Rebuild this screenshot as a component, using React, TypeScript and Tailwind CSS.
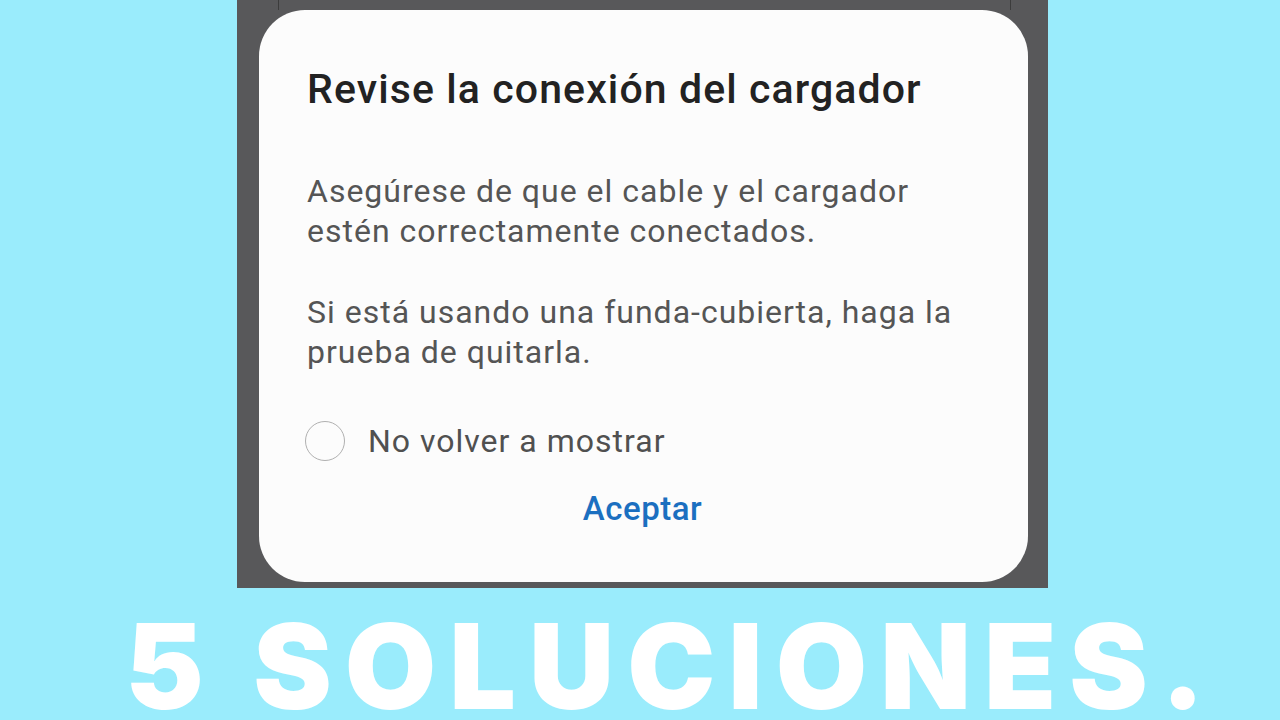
export default function App() {
  return (
    <div className="flex h-[720px] w-[1280px] flex-col overflow-hidden bg-[#9aecfc] font-['Roboto',sans-serif]">
      <div className="relative ml-[237px] flex h-[588px] w-[811px] shrink-0 flex-col bg-[#58585a] pb-[6px] pl-[22px] pr-[20px] pt-[10px]">
        <div className="absolute left-[41px] top-0 h-[10px] w-px bg-[#3c3c3c]" />
        <div className="absolute right-[37px] top-0 h-[10px] w-px bg-[#3c3c3c]" />
        <div className="flex flex-1 flex-col rounded-[46px] bg-[#fcfcfc] pl-[48px] pr-[30px] pt-[53px]">
          <h1 className="whitespace-nowrap text-[41px] font-medium leading-[52px] tracking-[1.1px] text-[#222222]">
            Revise la conexión del cargador
          </h1>
          <p className="mt-[56px] whitespace-nowrap text-[32px] leading-[40px] tracking-[1px] text-[#555555]">
            Asegúrese de que el cable y el cargador
            <br />
            estén correctamente conectados.
          </p>
          <p className="mt-[41px] whitespace-nowrap text-[32px] leading-[40px] tracking-[1px] text-[#555555]">
            Si está usando una funda-cubierta, haga la
            <br />
            prueba de quitarla.
          </p>
          <div className="-ml-[2px] mt-[49px] flex items-center gap-[23px]">
            <span className="h-[40px] w-[40px] rounded-full border-[1.5px] border-[#b0b0b0]" />
            <span className="text-[32px] leading-[40px] tracking-[1px] text-[#505050]">No volver a mostrar</span>
          </div>
          <div className="mt-[28px] flex justify-center pr-[20px]">
            <span className="text-[33px] font-medium leading-[40px] tracking-[0.5px] text-[#1b6fc0]">Aceptar</span>
          </div>
        </div>
      </div>
      <div className="flex flex-1 justify-center pl-[63px] pt-[33px]">
        <div className="whitespace-nowrap font-['Inter',sans-serif] text-[118px] font-black leading-[90px] tracking-[0.11em] text-white">
          5 SOLUCIONES.
        </div>
      </div>
    </div>
  );
}
